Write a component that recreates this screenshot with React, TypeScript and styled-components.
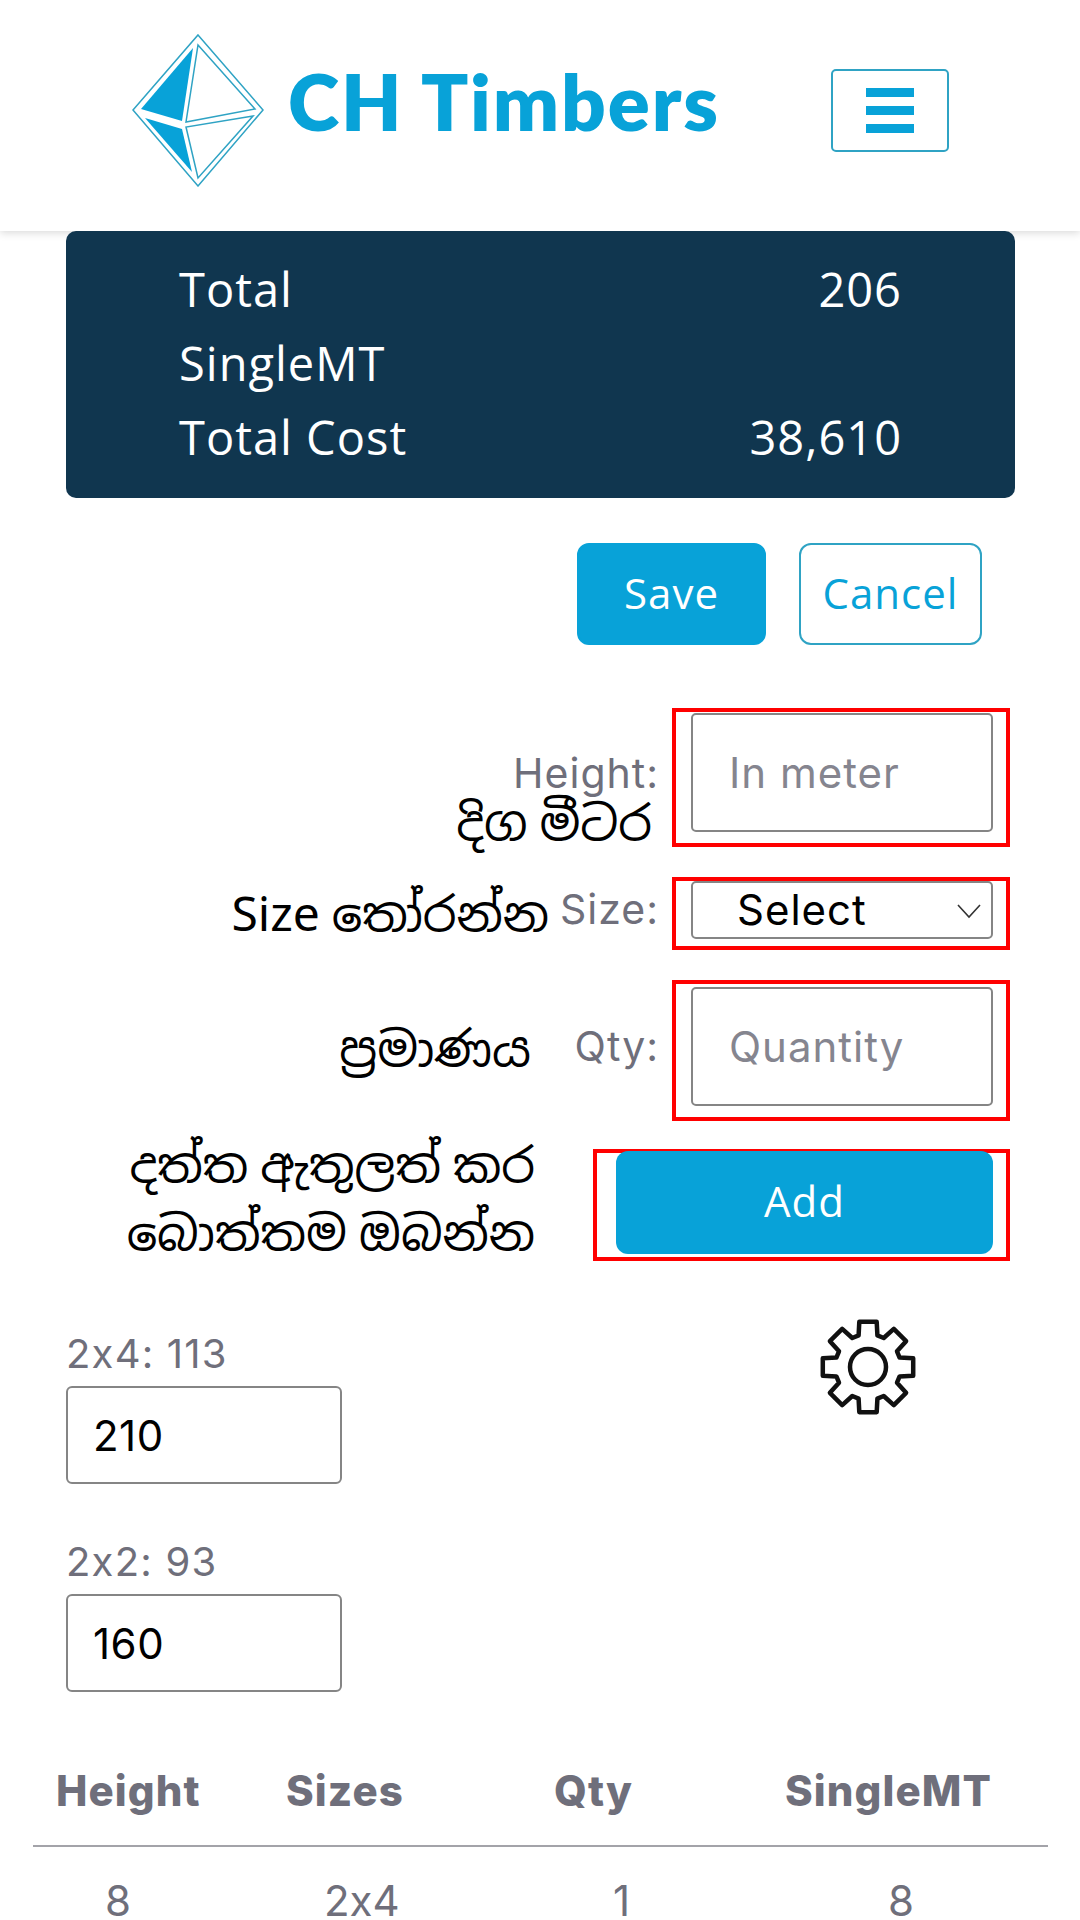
import React from 'react';
import styled, { createGlobalStyle } from 'styled-components';

const GlobalStyle = createGlobalStyle`
  html, body {
    margin: 0;
    padding: 0;
    background: #ffffff;
  }
  * {
    box-sizing: border-box;
  }
`;

const BLUE = '#08a2d8';
const GREY = '#6f6f7b';
const BRAND_FONT = `Lato, "Noto Sans", sans-serif`;
const UI_FONT = `"Open Sans", "Noto Sans", sans-serif`;
const FORM_FONT = `Inter, "Noto Sans", sans-serif`;
const NOTE_FONT = `"Noto Sans Sinhala", "Noto Sans", "DejaVu Sans", sans-serif`;

const Page = styled.div`
  width: 1080px;
  height: 1920px;
  overflow: hidden;
  background: #ffffff;
  font-family: ${UI_FONT};
`;

const Header = styled.header`
  height: 231px;
  display: flex;
  align-items: flex-start;
  padding: 33px 0 0 132px;
  box-shadow: 0 2px 8px rgba(0, 0, 0, 0.15);
`;

const Brand = styled.div`
  display: flex;
  align-items: flex-start;
  gap: 24px;
  width: 699px;
`;

const BrandName = styled.div`
  margin-top: 21px;
  font-family: ${BRAND_FONT};
  font-size: 78px;
  line-height: 94px;
  font-weight: 800;
  letter-spacing: 1.9px;
  color: ${BLUE};
  white-space: nowrap;
`;

const MenuButton = styled.button`
  width: 118px;
  height: 83px;
  margin-top: 36px;
  padding: 0;
  display: flex;
  flex-direction: column;
  align-items: center;
  justify-content: center;
  gap: 9px;
  background: #ffffff;
  border: 2px solid #2fa3c4;
  border-radius: 5px;
`;

const MenuBar = styled.span`
  width: 48px;
  height: 9px;
  background: ${BLUE};
`;

const SummaryPanel = styled.section`
  margin: 0 65px 0 66px;
  height: 267px;
  padding: 21px 113px 0;
  background: #10364f;
  border-radius: 10px;
  color: #ffffff;
`;

const SummaryRow = styled.div`
  height: 74px;
  display: flex;
  justify-content: space-between;
  align-items: center;
  font-size: 47px;
  font-weight: 400;
  letter-spacing: 1px;
`;

const ActionRow = styled.div`
  display: flex;
  justify-content: flex-end;
  gap: 33px;
  padding: 45px 98px 0 0;
`;

const ActionButton = styled.button<{ $primary?: boolean }>`
  width: ${(p) => (p.$primary ? '189px' : '183px')};
  height: 102px;
  padding: 0 0 4px;
  font-family: ${UI_FONT};
  font-size: 42px;
  letter-spacing: 1px;
  font-weight: 400;
  border-radius: 12px;
  border: 2px solid ${(p) => (p.$primary ? BLUE : '#2fa3c4')};
  background: ${(p) => (p.$primary ? BLUE : '#ffffff')};
  color: ${(p) => (p.$primary ? '#ffffff' : BLUE)};
`;

const Form = styled.div`
  margin-top: 63px;
  padding-right: 70px;
  display: flex;
  flex-direction: column;
  align-items: flex-end;
`;

const FormRow = styled.div<{ $top: number }>`
  position: relative;
  display: flex;
  justify-content: flex-end;
  align-items: center;
  margin-top: ${(p) => p.$top}px;
  font-family: ${FORM_FONT};
`;

const FieldLabel = styled.label`
  margin: 0 13px 10px 0;
  font-size: 41px;
  letter-spacing: 1px;
  line-height: 50px;
  color: ${GREY};
  white-space: nowrap;
`;

// the red marks drawn on the screenshot
const Marked = styled.div<{ $h: number; $w?: number; $top?: number; $left?: number }>`
  width: ${(p) => p.$w ?? 338}px;
  height: ${(p) => p.$h}px;
  padding: ${(p) => p.$top ?? 1}px 0 0 ${(p) => p.$left ?? 15}px;
  border: 4px solid #ff0000;
`;

const TextInput = styled.input<{ $h: number }>`
  display: block;
  width: 302px;
  height: ${(p) => p.$h}px;
  padding: 0 36px;
  font-family: ${FORM_FONT};
  font-size: 42px;
  letter-spacing: 1px;
  color: #000000;
  background: #ffffff;
  border: 2px solid #858585;
  border-radius: 5px;

  &::placeholder {
    color: #85858f;
    opacity: 1;
  }
`;

const SelectBox = styled.div`
  position: relative;
  width: 302px;
  height: 58px;
  padding-left: 44px;
  font-size: 42px;
  letter-spacing: 1px;
  line-height: 54px;
  color: #000000;
  border: 2px solid #858585;
  border-radius: 5px;
`;

const Chevron = styled.svg`
  position: absolute;
  right: 9px;
  top: 20px;
  width: 26px;
  height: 16px;
`;

const AddButton = styled.button`
  display: block;
  width: 377px;
  height: 103px;
  margin-top: -2px;
  padding: 0 0 4px;
  font-family: ${UI_FONT};
  font-size: 42px;
  letter-spacing: 1px;
  font-weight: 400;
  color: #ffffff;
  background: ${BLUE};
  border: 0;
  border-radius: 12px;
`;

const Note = styled.div<{ $right: number; $top: number }>`
  position: absolute;
  right: ${(p) => p.$right}px;
  top: ${(p) => p.$top}px;
  font-family: ${NOTE_FONT};
  font-size: 48px;
  line-height: 68px;
  word-spacing: -12px;
  color: #000000;
  text-align: right;
  white-space: nowrap;
`;

const RatesArea = styled.div`
  display: flex;
  align-items: flex-start;
  margin-top: 56px;
  padding-left: 66px;
`;

const RateColumn = styled.div`
  width: 276px;
  padding-top: 10px;
`;

const RateLabel = styled.div`
  height: 59px;
  font-family: ${FORM_FONT};
  font-size: 40px;
  letter-spacing: 1.2px;
  line-height: 54px;
  font-feature-settings: 'calt' 0;
  color: ${GREY};
`;

const RateBlock = styled.div`
  margin-bottom: 51px;
`;

const RateInput = styled.input`
  display: block;
  width: 276px;
  height: 98px;
  padding: 0 25px;
  font-family: ${FORM_FONT};
  font-size: 42px;
  letter-spacing: 0.5px;
  color: #000000;
  background: #ffffff;
  border: 2px solid #858585;
  border-radius: 6px;
`;

const SettingsIcon = styled.svg`
  margin-left: 476px;
  width: 100px;
  height: 100px;
  flex: none;
`;

const TableWrap = styled.div`
  margin: 25px 32px 0 33px;
  font-family: ${FORM_FONT};
  color: ${GREY};
  font-feature-settings: 'calt' 0;
`;

const HeadRow = styled.div`
  display: grid;
  grid-template-columns: 230px 268px 231px 1fr;
  height: 79px;
  padding-left: 23px;
  font-size: 42px;
  line-height: 46px;
  font-weight: 800;
  letter-spacing: 1.1px;
  border-bottom: 2px solid #a3a3a9;
`;

const BodyRow = styled.div`
  display: grid;
  grid-template-columns: 219px 289px 275px 1fr;
  padding: 31px 0 0 72px;
  font-size: 42px;
  line-height: 46px;
`;

const LogoMark = () => (
  <svg width="132" height="154" viewBox="0 0 132 154">
    <polygon points="66,2 131,77 66,153 1,77" fill="none" stroke="#2fa3c4" strokeWidth="1.5" />
    <polygon points="61,15 9,76 50,88" fill={BLUE} />
    <polygon points="13,85 50,96 60,139" fill={BLUE} />
    <polygon points="66,12 123,76 54,89" fill="none" stroke="#2fa3c4" strokeWidth="1.5" />
    <polygon points="121,83 54,94 66,145" fill="none" stroke="#2fa3c4" strokeWidth="1.5" />
  </svg>
);

// eight teeth round the centre of a 100x100 box
const gearPath = Array.from({ length: 8 }, (_, i) => {
  const a = (i * Math.PI) / 4 - Math.PI / 2;
  const pt = (r: number, d: number) =>
    `${(50 + r * Math.cos(a + d)).toFixed(1)} ${(50 + r * Math.sin(a + d)).toFixed(1)}`;
  return `${i === 0 ? 'M' : 'L'}${pt(33, -0.29)} L${pt(46, -0.19)} L${pt(46, 0.19)} L${pt(33, 0.29)}`;
}).join(' ') + ' Z';

const App: React.FC = () => {
  return (
    <Page>
      <GlobalStyle />
      <Header>
        <Brand>
          <LogoMark />
          <BrandName>CH Timbers</BrandName>
        </Brand>
        <MenuButton aria-label="Menu">
          <MenuBar />
          <MenuBar />
          <MenuBar />
        </MenuButton>
      </Header>

      <SummaryPanel>
        <SummaryRow>
          <span>Total</span>
          <span>206</span>
        </SummaryRow>
        <SummaryRow>
          <span>SingleMT</span>
        </SummaryRow>
        <SummaryRow>
          <span>Total Cost</span>
          <span>38,610</span>
        </SummaryRow>
      </SummaryPanel>

      <ActionRow>
        <ActionButton $primary>Save</ActionButton>
        <ActionButton>Cancel</ActionButton>
      </ActionRow>

      <Form>
        <FormRow $top={0}>
          <FieldLabel>Height:</FieldLabel>
          <Marked $h={139}>
            <TextInput $h={119} placeholder="In meter" />
          </Marked>
          <Note $right={358} $top={81}>දිග මීටර</Note>
        </FormRow>
        <FormRow $top={30}>
          <FieldLabel>Size:</FieldLabel>
          <Marked $h={73} $top={0}>
            <SelectBox>
              Select
              <Chevron viewBox="0 0 26 16">
                <path d="M2 2l11 12L24 2" fill="none" stroke="#333" strokeWidth="1.6" />
              </Chevron>
            </SelectBox>
          </Marked>
          <Note $right={461} $top={3}>Size තෝරන්න</Note>
        </FormRow>
        <FormRow $top={30}>
          <FieldLabel>Qty:</FieldLabel>
          <Marked $h={141} $top={3}>
            <TextInput $h={119} placeholder="Quantity" />
          </Marked>
          <Note $right={479} $top={35}>ප්‍රමාණය</Note>
        </FormRow>
        <FormRow $top={28}>
          <Marked $h={112} $w={417} $top={0} $left={19}>
            <AddButton>Add</AddButton>
          </Marked>
          <Note $right={475} $top={-18}>
            දත්ත ඇතුලත් කර
            <br />
            බොත්තම ඔබන්න
          </Note>
        </FormRow>
      </Form>

      <RatesArea>
        <RateColumn>
          <RateBlock>
            <RateLabel>2x4: 113</RateLabel>
            <RateInput defaultValue="210" />
          </RateBlock>
          <RateBlock>
            <RateLabel>2x2: 93</RateLabel>
            <RateInput defaultValue="160" />
          </RateBlock>
        </RateColumn>
        <SettingsIcon viewBox="0 0 100 100" fill="none" stroke="#111" strokeWidth="4.5" strokeLinejoin="round">
          <path d={gearPath} />
          <circle cx="50" cy="50" r="18" />
        </SettingsIcon>
      </RatesArea>

      <TableWrap>
        <HeadRow>
          <span>Height</span>
          <span>Sizes</span>
          <span>Qty</span>
          <span>SingleMT</span>
        </HeadRow>
        <BodyRow>
          <span>8</span>
          <span>2x4</span>
          <span>1</span>
          <span>8</span>
        </BodyRow>
      </TableWrap>
    </Page>
  );
};

export default App;
